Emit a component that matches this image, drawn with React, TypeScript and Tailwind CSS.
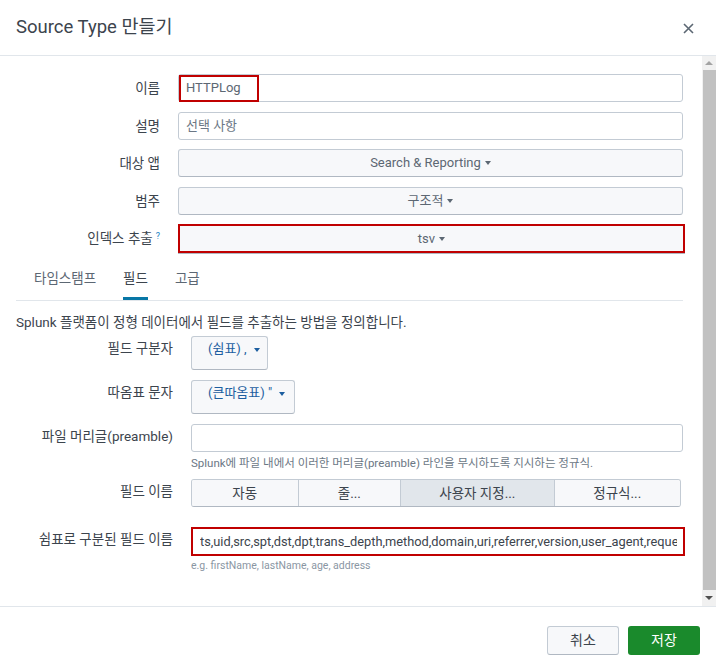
import React from "react";

const font = "font-['Roboto','Noto_Sans_CJK_KR',sans-serif]";

const Caret = ({ className = "" }: { className?: string }) => (
  <span className={`inline-block align-middle ml-[4px] border-x-[3.5px] border-x-transparent border-t-[4px] ${className}`} />
);

type Segment = { label: string; width: string; active?: boolean };

const segments: Segment[] = [
  { label: "자동", width: "w-[106px]" },
  { label: "줄...", width: "w-[103px]" },
  { label: "사용자 지정...", width: "w-[154px]", active: true },
  { label: "정규식...", width: "w-[127px]" },
];

const TopRow = ({ label, children, hint }: { label: string; children: React.ReactNode; hint?: boolean }) => (
  <div className="flex items-start">
    <div className="w-[144px] shrink-0 text-right text-[13.5px] leading-[28px] text-[#3c444d]">
      {label}
      {hint && <sup className="text-[#1a7fc4] text-[9px] ml-[3px]">?</sup>}
    </div>
    <div className="ml-[18px] flex-1 min-w-0">{children}</div>
  </div>
);

const FieldRow = ({ label, children }: { label: string; children: React.ReactNode }) => (
  <div className="flex items-start">
    <div className="w-[157px] shrink-0 text-right text-[13.5px] leading-[18px] pt-[3px] text-[#3c444d]">{label}</div>
    <div className="ml-[18px] flex-1 min-w-0">{children}</div>
  </div>
);

export default function App() {
  return (
    <div className={`w-[716px] h-[670px] bg-white flex flex-col ${font}`}>
      {/* header */}
      <div className="h-[56px] shrink-0 flex items-center justify-between pl-4 pr-[22px] border-b border-[#e1e6eb]">
        <h2 className="text-[18.5px] text-[#3c444d]">Source Type 만들기</h2>
        <svg width="11" height="11" viewBox="0 0 11 11" className="mt-[2px]">
          <path d="M1 1 L10 10 M10 1 L1 10" stroke="#5c6773" strokeWidth="1.6" />
        </svg>
      </div>

      {/* body */}
      <div className="h-[551px] shrink-0 flex border-b border-[#e1e6eb]">
        <div className="flex-1 min-w-0 pl-4 pr-[19px] pt-[18px] overflow-hidden">
          <div className="flex flex-col gap-[9.5px]">
            <TopRow label="이름">
              <div className="relative h-[28px] border border-[#c3cbd4] rounded-[3px] flex items-center px-[7px] text-[13px] text-[#5c6773]">
                HTTPLog
                <div className="absolute left-0 top-0 w-[80px] h-[27px] border-2 border-[#c00000]" />
              </div>
            </TopRow>
            <TopRow label="설명">
              <div className="h-[28px] border border-[#c3cbd4] rounded-[3px] flex items-center px-[7px] text-[13px] text-[#6b7785]">
                선택 사항
              </div>
            </TopRow>
            <TopRow label="대상 앱">
              <div className="h-[28px] border border-[#c3cbd4] border-b-[#b0b8c2] rounded-[3px] bg-[#f7f8fa] flex items-center justify-center text-[13px] text-[#5c6773]">
                Search &amp; Reporting <Caret className="border-t-[#5c6773]" />
              </div>
            </TopRow>
            <TopRow label="범주">
              <div className="h-[28px] border border-[#c3cbd4] border-b-[#b0b8c2] rounded-[3px] bg-[#f7f8fa] flex items-center justify-center text-[13px] text-[#5c6773]">
                구조적 <Caret className="border-t-[#5c6773]" />
              </div>
            </TopRow>
            <TopRow label="인덱스 추출" hint>
              <div className="h-[29px] mr-[-2px] border-2 border-[#c00000] bg-[#f7f8fa] flex items-center justify-center text-[13px] text-[#5c6773] shadow-[0_1px_0_#b0b8c2]">
                tsv <Caret className="border-t-[#5c6773]" />
              </div>
            </TopRow>
          </div>

          {/* tabs */}
          <div className="mt-[15px] flex gap-[27px] pl-[18px] border-b border-[#e1e6eb] text-[13.5px]">
            <div className="leading-[20px] pb-[9px] border-b-[3px] border-transparent text-[#5c6773]">타임스탬프</div>
            <div className="leading-[20px] pb-[9px] border-b-[3px] border-[#0877a6] text-[#3c444d]">필드</div>
            <div className="leading-[20px] pb-[9px] border-b-[3px] border-transparent text-[#5c6773]">고급</div>
          </div>

          <p className="mt-[12px] text-[13.5px] leading-[18px] text-[#3c444d]">
            Splunk 플랫폼이 정형 데이터에서 필드를 추출하는 방법을 정의합니다.
          </p>

          <div className="mt-[5px] flex flex-col">
            <FieldRow label="필드 구분자">
              <div className="w-[77px] h-[34px] border border-[#c3cbd4] border-b-[#b0b8c2] rounded-[3px] bg-[#f7f8fa] pt-[3px] pl-[16px] text-[13px] leading-[18px] text-[#1c5ea0]">
                (쉼표) , <Caret className="border-t-[#1c5ea0]" />
              </div>
            </FieldRow>
            <div className="h-[10px]" />
            <FieldRow label="따옴표 문자">
              <div className="w-[104px] h-[34px] border border-[#c3cbd4] border-b-[#b0b8c2] rounded-[3px] bg-[#f7f8fa] pt-[3px] pl-[16px] text-[13px] leading-[18px] text-[#1c5ea0]">
                (큰따옴표) " <Caret className="border-t-[#1c5ea0]" />
              </div>
            </FieldRow>
            <div className="h-[10px]" />
            <FieldRow label="파일 머리글(preamble)">
              <div className="h-[28px] border border-[#c3cbd4] rounded-[3px]" />
              <div className="mt-[4px] text-[11.5px] leading-[14px] text-[#6b7785]">
                Splunk에 파일 내에서 이러한 머리글(preamble) 라인을 무시하도록 지시하는 정규식.
              </div>
            </FieldRow>
            <div className="h-[9px]" />
            <FieldRow label="필드 이름">
              <div className="flex h-[28px] w-[490px] border border-[#c3cbd4] border-b-[#b0b8c2] rounded-[3px] overflow-hidden text-[13.5px] text-[#3c444d]">
                {segments.map((s, i) => (
                  <div
                    key={s.label}
                    className={`${s.width} flex items-center justify-center ${i > 0 ? "border-l border-[#c3cbd4]" : ""} ${
                      s.active ? "bg-[#e1e6eb]" : "bg-[#f7f8fa]"
                    }`}
                  >
                    {s.label}
                  </div>
                ))}
              </div>
            </FieldRow>
            <div className="h-[20px]" />
            <FieldRow label="쉼표로 구분된 필드 이름">
              <input
                readOnly
                value="ts,uid,src,spt,dst,dpt,trans_depth,method,domain,uri,referrer,version,user_agent,request_body_len"
                className="block w-[calc(100%+2px)] h-[29px] border-2 border-[#c00000] pl-[7px] pr-[6px] text-[12.8px] text-[#3c444d] outline-none bg-white"
              />
              <div className="mt-[3px] text-[10.5px] leading-[14px] text-[#8a96a3]">e.g. firstName, lastName, age, address</div>
            </FieldRow>
          </div>
        </div>

        {/* scrollbar */}
        <div className="w-[14px] shrink-0 bg-[#f1f1f1] flex flex-col items-center">
          <div className="h-[14px] flex items-center justify-center">
            <span className="border-x-[4px] border-x-transparent border-b-[4px] border-b-[#a3a3a3]" />
          </div>
          <div className="w-[13px] ml-[1px] flex-1 bg-[#c1c1c1]" />
          <div className="h-[16px] flex items-center justify-center">
            <span className="border-x-[4px] border-x-transparent border-t-[4px] border-t-[#505050]" />
          </div>
        </div>
      </div>

      {/* footer */}
      <div className="flex-1 flex items-start justify-end gap-[9px] pr-4 pt-[19px]">
        <button className="w-[72px] h-[29px] border border-[#c3cbd4] border-b-[#b0b8c2] rounded-[3px] bg-[#f7f8fa] text-[14px] text-[#3c444d]">
          취소
        </button>
        <button className="w-[72px] h-[29px] rounded-[3px] bg-[#1a8a2c] text-[14px] text-white">저장</button>
      </div>
    </div>
  );
}
